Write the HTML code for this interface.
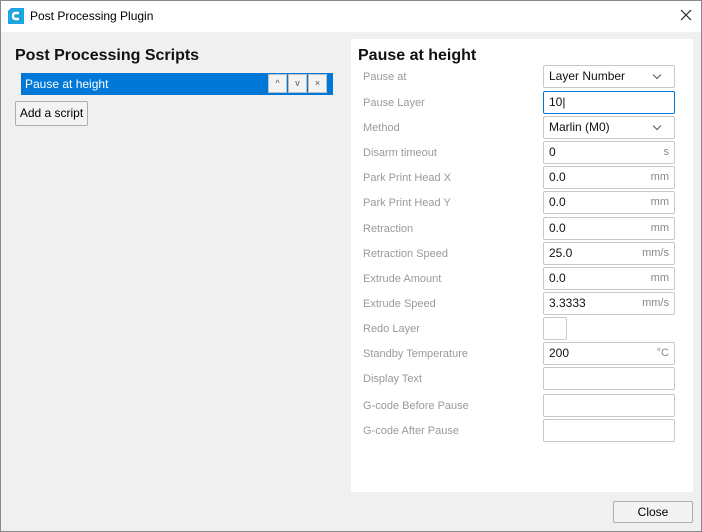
<!DOCTYPE html>
<html><head><style>
*{box-sizing:border-box;margin:0;padding:0}
html,body{width:702px;height:532px}
body{position:relative;background:#f0f0f0;font-family:"Liberation Sans","DejaVu Sans",sans-serif;overflow:hidden}
.a{position:absolute}
.tb{left:0;top:0;width:702px;height:32px;background:#fff}
.lbl{left:363px;font-size:11px;color:#9a9a9a;line-height:14px}
.f{left:543px;width:132px;height:23px;background:#fff;border:1px solid #c8c8c8;border-radius:2px;font-size:12px;color:#111;padding:0 5px;line-height:21px}
.u{position:absolute;right:5px;top:0;color:#888;font-size:11px;line-height:21px}
.chev{position:absolute;right:14px;top:6px;width:6px;height:6px;border-right:1px solid #555;border-bottom:1px solid #555;transform:rotate(45deg)}
.sb{top:74px;width:19px;height:19px;background:#f3f3f3;border:1px solid #c0c0c0;font-size:9px;color:#555;text-align:center;line-height:17px}
</style></head><body>
<div class="a tb"></div>
<svg class="a" style="left:8px;top:8px" width="16" height="16" viewBox="0 0 16 16"><path d="M3 0H16V16H0V3Z" fill="#1ea4e0"/><path d="M11 5H7.5Q5 5 5 8Q5 11 7.5 11H11" stroke="#fff" stroke-width="2.4" fill="none"/></svg>
<div class="a" style="left:30px;top:9px;font-size:12px;color:#000">Post Processing Plugin</div>
<svg class="a" style="left:680px;top:9px" width="12" height="12" viewBox="0 0 12 12"><path d="M1 1L11 11M11 1L1 11" stroke="#222" stroke-width="1.2"/></svg>
<div class="a" style="left:15px;top:47px;font-size:16px;font-weight:bold;color:#111">Post Processing Scripts</div>
<div class="a" style="left:21px;top:73px;width:312px;height:22px;background:#0078d7"></div>
<div class="a" style="left:25px;top:77px;font-size:12px;color:#fff">Pause at height</div>
<div class="a sb" style="left:268px">^</div>
<div class="a sb" style="left:288px">v</div>
<div class="a sb" style="left:308px">×</div>
<div class="a" style="left:15px;top:101px;width:73px;height:25px;background:#f3f3f3;border:1px solid #adadad;border-radius:2px;font-size:12px;text-align:center;line-height:23px;color:#000">Add a script</div>
<div class="a" style="left:351px;top:39px;width:342px;height:453px;background:#fff"></div>
<div class="a" style="left:358px;top:47px;font-size:16px;font-weight:bold;color:#111">Pause at height</div>

<div class="a lbl" style="top:70px">Pause at</div><div class="a f" style="top:65px">Layer Number<span class="chev"></span></div>
<div class="a lbl" style="top:96px">Pause Layer</div><div class="a f" style="top:91px;border-color:#0078d7">10|</div>
<div class="a lbl" style="top:121px">Method</div><div class="a f" style="top:116px">Marlin (M0)<span class="chev"></span></div>
<div class="a lbl" style="top:146px">Disarm timeout</div><div class="a f" style="top:141px">0<span class="u">s</span></div>
<div class="a lbl" style="top:171px">Park Print Head X</div><div class="a f" style="top:166px">0.0<span class="u">mm</span></div>
<div class="a lbl" style="top:196px">Park Print Head Y</div><div class="a f" style="top:191px">0.0<span class="u">mm</span></div>
<div class="a lbl" style="top:222px">Retraction</div><div class="a f" style="top:217px">0.0<span class="u">mm</span></div>
<div class="a lbl" style="top:247px">Retraction Speed</div><div class="a f" style="top:242px">25.0<span class="u">mm/s</span></div>
<div class="a lbl" style="top:272px">Extrude Amount</div><div class="a f" style="top:267px">0.0<span class="u">mm</span></div>
<div class="a lbl" style="top:297px">Extrude Speed</div><div class="a f" style="top:292px">3.3333<span class="u">mm/s</span></div>
<div class="a lbl" style="top:322px">Redo Layer</div><div class="a f" style="top:317px;width:24px"></div>
<div class="a lbl" style="top:347px">Standby Temperature</div><div class="a f" style="top:342px">200<span class="u">°C</span></div>
<div class="a lbl" style="top:372px">Display Text</div><div class="a f" style="top:367px"></div>
<div class="a lbl" style="top:399px">G-code Before Pause</div><div class="a f" style="top:394px"></div>
<div class="a lbl" style="top:424px">G-code After Pause</div><div class="a f" style="top:419px"></div>

<div class="a" style="left:613px;top:501px;width:80px;height:22px;background:#f3f3f3;border:1px solid #adadad;border-radius:2px;font-size:12px;text-align:center;line-height:20px;color:#000">Close</div>
<div class="a" style="left:0;top:0;width:702px;height:532px;border:1px solid #888;pointer-events:none"></div>
</body></html>
